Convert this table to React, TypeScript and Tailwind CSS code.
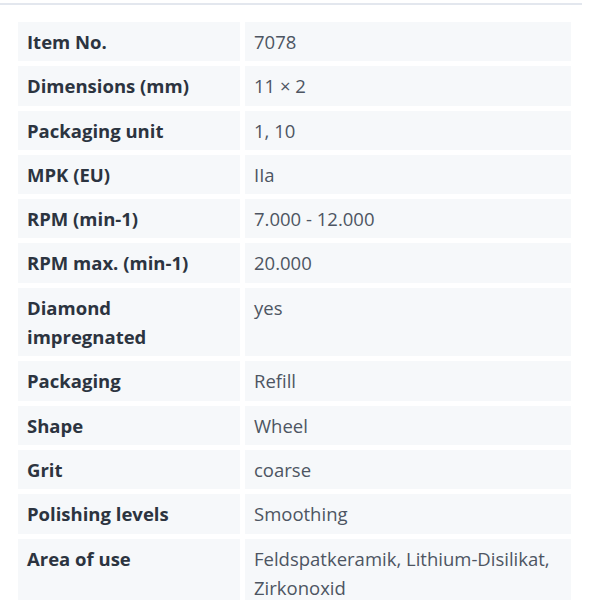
const ROWS: { label: string; value: string }[] = [
  { label: "Item No.", value: "7078" },
  { label: "Dimensions (mm)", value: "11 × 2" },
  { label: "Packaging unit", value: "1, 10" },
  { label: "MPK (EU)", value: "IIa" },
  { label: "RPM (min-1)", value: "7.000 - 12.000" },
  { label: "RPM max. (min-1)", value: "20.000" },
  { label: "Diamond impregnated", value: "yes" },
  { label: "Packaging", value: "Refill" },
  { label: "Shape", value: "Wheel" },
  { label: "Grit", value: "coarse" },
  { label: "Polishing levels", value: "Smoothing" },
  { label: "Area of use", value: "Feldspatkeramik, Lithium-Disilikat, Zirkonoxid" },
];

export default function App() {
  return (
    <div className="w-[600px] h-[600px] overflow-hidden bg-white" style={{ fontFamily: '"Open Sans", "Noto Sans", sans-serif' }}>
      {/* top divider */}
      <div className="w-[582px] pt-[3px]">
        <div className="h-[2px] bg-[#e3e7ee]" />
      </div>

      <div className="pl-[13px] pt-[12px]">
        <table className="w-[563px] border-separate border-spacing-[5px] table-fixed">
          <colgroup>
            <col className="w-[222px]" />
            <col />
          </colgroup>
          <tbody>
            {ROWS.map((r) => (
              <tr key={r.label}>
                <td className="bg-[#f6f8fa] align-top px-[9px] py-[5px] text-[18.5px] leading-[29.3px] font-bold text-[#2c3440]">
                  {r.label === "Diamond impregnated" ? (
                    <>
                      Diamond
                      <br />
                      impregnated
                    </>
                  ) : (
                    r.label
                  )}
                </td>
                <td className="bg-[#f6f8fa] align-top px-[9px] py-[5px] text-[18.5px] leading-[29.3px] text-[#4d5562]">
                  {r.value}
                </td>
              </tr>
            ))}
          </tbody>
        </table>
      </div>
    </div>
  );
}
